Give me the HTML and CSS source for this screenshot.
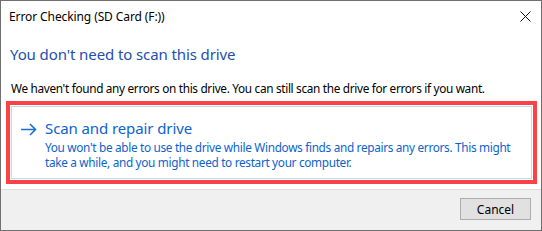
FILE: index.html
```html
<!DOCTYPE html>
<html>
<head>
<meta charset="utf-8">
<link rel="stylesheet" href="styles.css">
</head>
<body>
<div class="window">
  <div class="titlebar">
    <span class="title">Error Checking (SD Card (F:))</span>
    <span class="close">
      <svg width="11" height="11" viewBox="0 0 11 11"><path d="M0.5 0.5 L10.5 10.5 M10.5 0.5 L0.5 10.5" stroke="#111" stroke-width="1" fill="none"/></svg>
    </span>
  </div>
  <div class="content">
    <h1 class="heading">You don't need to scan this drive</h1>
    <p class="body">We haven't found any errors on this drive. You can still scan the drive for errors if you want.</p>
    <div class="highlight">
      <div class="cmdlink">
        <svg class="arrow" width="17" height="13" viewBox="0 0 17 13"><path d="M1 6.5 H15.5 M10 1 L15.5 6.5 L10 12" stroke="#1a6fd6" stroke-width="1.6" fill="none"/></svg>
        <div class="cmdtext">
          <div class="cmdtitle">Scan and repair drive</div>
          <div class="cmddesc">You won't be able to use the drive while Windows finds and repairs any errors. This might take a while, and you might need to restart your computer.</div>
        </div>
      </div>
    </div>
  </div>
  <div class="footer">
    <button class="btn">Cancel</button>
  </div>
</div>
</body>
</html>
```

FILE: styles.css
```css
* { box-sizing: border-box; }
html, body { margin: 0; padding: 0; background: #fff; }
body { font-family: "Noto Sans", "Open Sans", sans-serif; }
.window {
  width: 542px;
  height: 231px;
  border: 1px solid #707070;
  background: #fff;
  display: flex;
  flex-direction: column;
}
.titlebar {
  height: 30px;
  display: flex;
  align-items: center;
  justify-content: space-between;
  padding: 0 10px 0 8px;
}
.title { font-size: 12px; color: #000; letter-spacing: -0.1px; }
.close { display: flex; width: 11px; height: 11px; }
.content { padding: 0 4px 0 5px; flex: 1; }
.heading {
  margin: 13px 0 0 4px;
  font-size: 15px;
  font-weight: normal;
  color: #1d4fb0;
  line-height: 20px;
  letter-spacing: -0.1px;
}
.body {
  margin: 16px 0 0 5px;
  font-size: 11.8px;
  line-height: 16px;
  color: #000;
  letter-spacing: -0.32px;
}
.highlight {
  margin-top: 5px;
  width: 531px;
  height: 83px;
  border: 4px solid #fd4245;
  padding: 1px;
}
.cmdlink {
  height: 100%;
  border: 1px solid #bcdcf4;
  display: flex;
  padding: 12px 8px 0 8px;
  gap: 8px;
}
.arrow { margin-top: 4px; flex: none; }
.cmdtext { color: #0c63ce; }
.cmdtitle { font-size: 15px; line-height: 18px; letter-spacing: -0.1px; }
.cmddesc { font-size: 11.8px; line-height: 15px; margin-top: 3px; letter-spacing: -0.32px; }
.footer {
  height: 41px;
  background: #f0f0f0;
  border-top: 1px solid #dfdfdf;
  display: flex;
  justify-content: flex-end;
  align-items: flex-start;
  padding: 8px 10px 0 0;
}
.btn {
  width: 71px;
  height: 22px;
  border: 1px solid #adadad;
  background: #e1e1e1;
  font-family: "Noto Sans", "Open Sans", sans-serif;
  font-size: 12px;
  color: #000;
  padding: 0;
}
```
